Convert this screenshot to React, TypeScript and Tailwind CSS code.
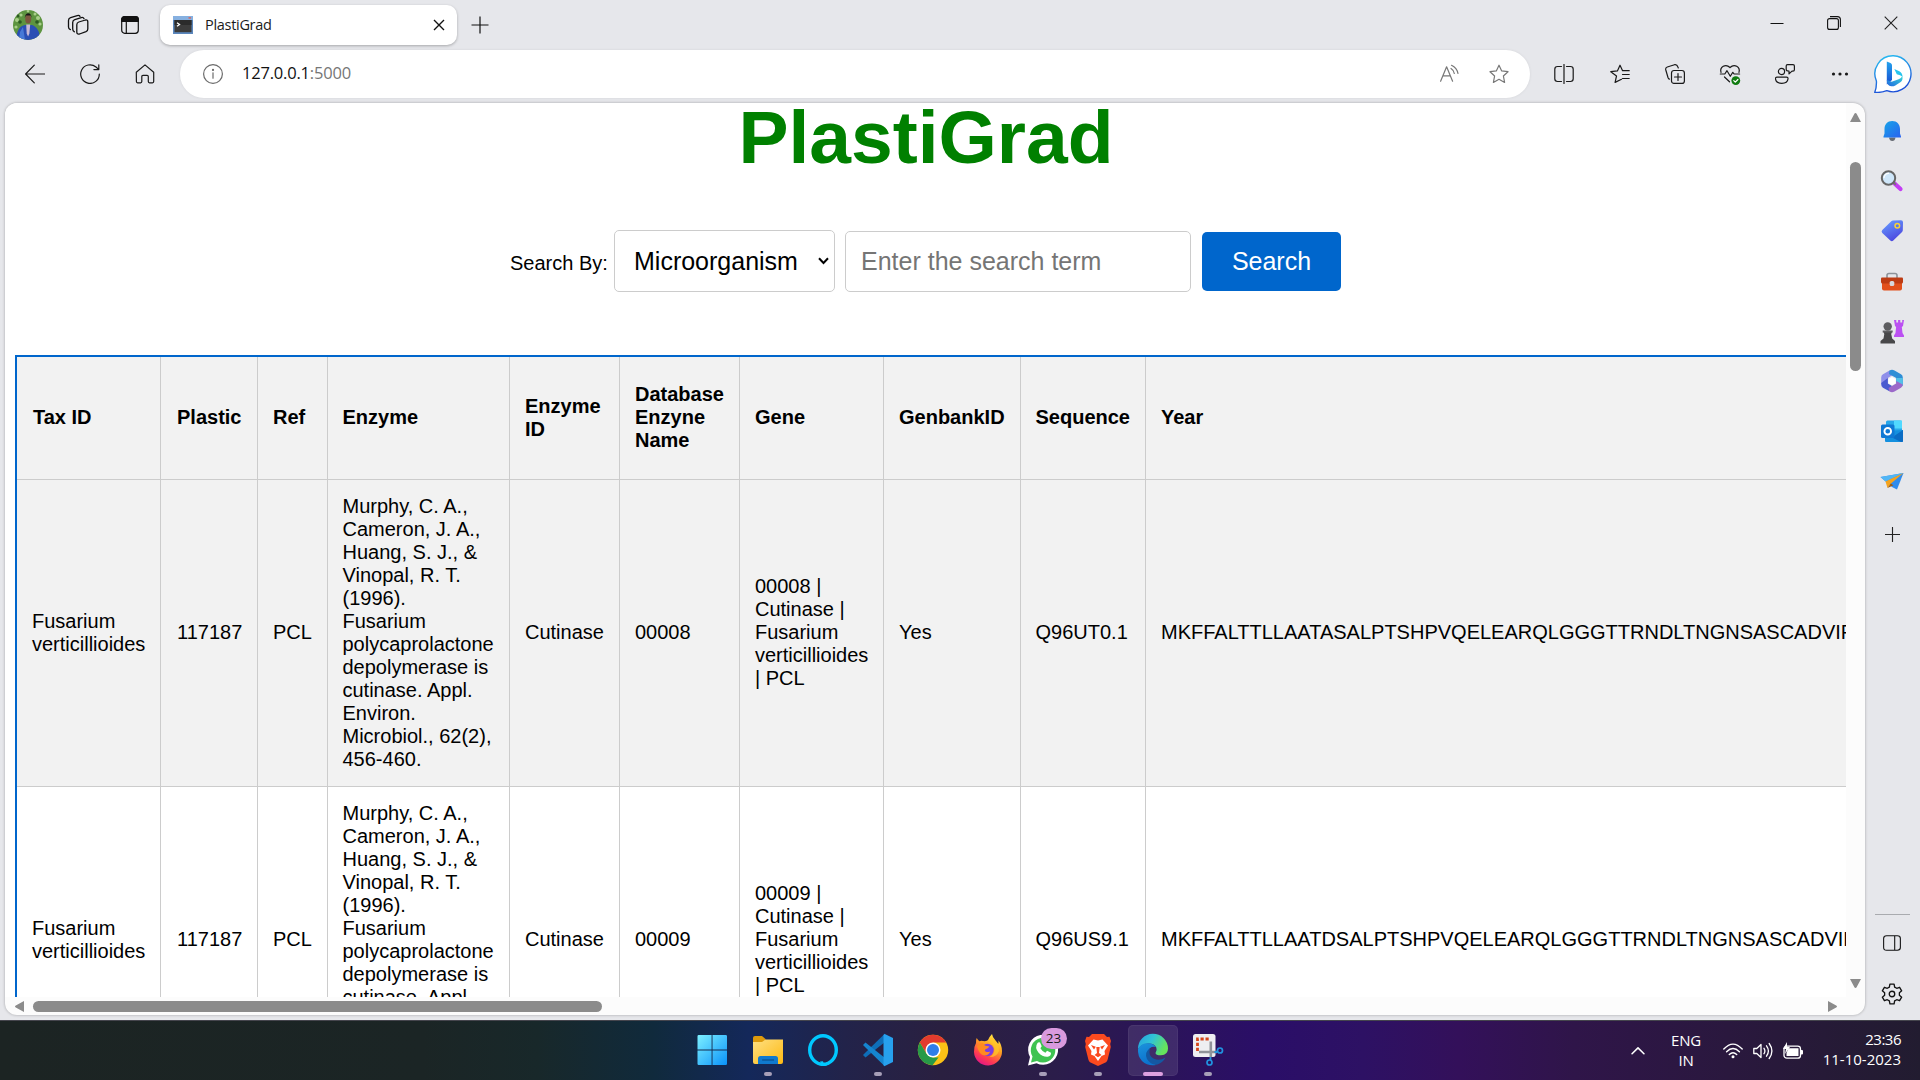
import React from "react";

type Kids = { children: React.ReactNode; className?: string };

function Line({ children, className = "" }: Kids) {
  return (
    <svg
      viewBox="0 0 20 20"
      fill="none"
      stroke="currentColor"
      strokeWidth="1.2"
      strokeLinecap="round"
      strokeLinejoin="round"
      className={"block h-5 w-5 shrink-0 " + className}
    >
      {children}
    </svg>
  );
}

function Slot({ children, className = "" }: Kids) {
  return <div className={"flex shrink-0 items-center justify-center " + className}>{children}</div>;
}

function Avatar() {
  return (
    <svg viewBox="0 0 30 30" className="block h-[30px] w-[30px]">
      <defs>
        <clipPath id="av"><circle cx="15" cy="15" r="15" /></clipPath>
      </defs>
      <g clipPath="url(#av)">
        <rect width="30" height="30" fill="#5d9440" />
        <g fill="#a9cf8a">
          <circle cx="4" cy="10" r="2" /><circle cx="8" cy="5" r="1.6" /><circle cx="25" cy="8" r="2" /><circle cx="15" cy="1" r="1.4" />
          <circle cx="22" cy="4" r="1.5" /><circle cx="27" cy="14" r="1.6" /><circle cx="3" cy="17" r="1.6" />
        </g>
        <g fill="#2c5a22">
          <circle cx="7" cy="12" r="1.8" /><circle cx="24" cy="12" r="1.8" /><circle cx="5" cy="6" r="1.4" />
        </g>
        <path d="M3 30 C4 19 7 16 12 15 L19 15 C24 17 27 21 27 30Z" fill="#2a4fb4" />
        <path d="M7 22 L10 17 L12 30 H6Z" fill="#4779d6" />
        <path d="M13.2 14.5h4l-.8 9-1.3 3-1.4-3z" fill="#c9b9d4" />
        <ellipse cx="15.2" cy="9" rx="3" ry="4.6" fill="#7c563f" />
        <path d="M11.8 8 C11.5 1.5 19 1.5 18.6 8 L17.8 5.5 H12.8Z" fill="#1a1716" />
      </g>
    </svg>
  );
}

function TabStrip() {
  return (
    <div className="flex h-[46px] shrink-0 items-start">
      <Slot className="ml-[3px] h-[50px] w-[50px]"><Avatar /></Slot>
      <Slot className="h-[50px] w-[49px]">
        <svg viewBox="0 0 22 22" className="block h-[22px] w-[22px]" fill="none" stroke="#111" strokeWidth="1.3" strokeLinejoin="round" strokeLinecap="round">
          <path d="M11.800 8L18.500 6Q20.800 5.500 20.800 7.800V15Q20.800 17 19 17.700L12.500 20Q9.800 20.700 9.800 18V10.700Q9.800 8.600 11.800 8Z" />
          <path d="M7.400 17.800 C6 17.200 5.700 16.500 5.700 15 V8.400 C5.700 6.800 6.600 6 7.800 5.600 L14.300 3.600 C15.600 3.200 16.500 3.600 17 4.600" />
          <path d="M3.400 15.600 C2 15 1.500 14.300 1.500 13 V6.400 C1.500 4.800 2.300 4 3.600 3.600 L10.300 1.600 C11.600 1.200 12.500 1.600 13 2.400" />
        </svg>
      </Slot>
      <Slot className="h-[50px] w-[56px]">
        <svg viewBox="0 0 18 18" className="block h-[18px] w-[18px]" fill="none" stroke="#111" strokeWidth="1.2">
          <rect x=".7" y=".7" width="16.6" height="16.6" rx="3" />
          <path d="M.7 5.5 V3.5 Q.7.7 3.5.7 H14.5 Q17.3.7 17.3 3.5 V5.5Z" fill="#111" />
          <path d="M5.3 5v12" />
        </svg>
      </Slot>
      <div className="ml-[2px] mt-[5px] flex h-[40px] w-[297px] shrink-0 items-center rounded-[10px] bg-white pl-[13px] shadow-[0_1px_3px_rgba(0,0,0,0.28)]">
        <svg viewBox="0 0 20 18" className="block h-[18px] w-5">
          <rect width="20" height="18" fill="#5b87bd" />
          <rect width="20" height="4" fill="#86b0e0" />
          <rect x="1.5" y="4" width="17" height="12.2" fill="#3c3c3c" />
          <rect x="1.5" y="4" width="17" height="5" fill="#2b2b2b" />
          <path d="M4 6.8 L6.500 8.500 L4 10.200" fill="none" stroke="#fff" strokeWidth="1.3" />
          <rect x="15.5" y="1.2" width="2.5" height="1.4" fill="#d9645a" />
        </svg>
        <span className="-mt-px ml-[12px] w-[228px] font-['Open_Sans',sans-serif] text-[14.5px] tracking-[-0.3px] text-[#1b1b1b]">PlastiGrad</span>
        <svg viewBox="0 0 12 12" className="block h-3 w-3 shrink-0" stroke="#111" strokeWidth="1.4"><path d="M1 1l10 10M11 1L1 11" /></svg>
      </div>
      <Slot className="h-[50px] w-[46px]">
        <svg viewBox="0 0 18 18" className="block h-[18px] w-[18px]" stroke="#111" strokeWidth="1.2"><path d="M9 .5v17M.5 9h17" /></svg>
      </Slot>
      <div className="flex-1" />
      <Slot className="h-[45px] w-[57px]"><svg viewBox="0 0 14 14" className="h-[14px] w-[14px]" stroke="#111" strokeWidth="1"><path d="M.5 7.500h13" /></svg></Slot>
      <Slot className="h-[45px] w-[57px]">
        <svg viewBox="0 0 14 14" className="h-[14px] w-[14px]" fill="none" stroke="#111" strokeWidth="1.1">
          <rect x=".6" y="2.6" width="10.8" height="10.8" rx="2" /><path d="M3 .6h7.400Q13.400.6 13.400 3.600V11" />
        </svg>
      </Slot>
      <Slot className="h-[45px] w-[58px]"><svg viewBox="0 0 14 14" className="h-[14px] w-[14px]" stroke="#222" strokeWidth="1.1"><path d="M.7.7l12.600 12.600M13.300.7L.7 13.300" /></svg></Slot>
    </div>
  );
}

const STAR = "M10 1.200 L12.700 6.900 L19 7.700 L14.400 12 L15.600 18.400 L10 15.300 L4.400 18.400 L5.600 12 L1 7.700 L7.300 6.900Z";

function Toolbar() {
  return (
    <div className="flex h-[57px] shrink-0 items-start pt-[4px] text-[#1a1a1a]">
      <Slot className="ml-[7px] h-[47px] w-[56px]"><Line><path d="M19.500 10H.6M9.300 1.200L.6 10l8.700 8.800" /></Line></Slot>
      <Slot className="h-[47px] w-[54px]"><Line><path d="M19.300 10A9.300 9.300 0 1 1 16 3l2.600 2.400M18.800.8v4.800h-4.900" /></Line></Slot>
      <Slot className="h-[47px] w-[56px]"><Line><path d="M1.300 8.200L10 .9l8.700 7.300V17.600q0 1.200-1.200 1.200h-3q-1.200 0-1.200-1.200v-5q0-1.200-1.200-1.200H8q-1.200 0-1.200 1.200v5q0 1.200-1.200 1.200h-3q-1.200 0-1.200-1.200Z" /></Line></Slot>
      <div className="ml-[7px] flex h-[48px] w-[1350px] shrink-0 items-center rounded-full bg-white shadow-[0_0_3px_rgba(0,0,0,0.08)]">
        <Slot className="mb-[1px] ml-[9px] h-[47px] w-[48px] text-[#6b6b6b]"><Line><circle cx="10" cy="10" r="9.400" /><path d="M10 8.800v5.400" /><circle cx="10" cy="5.900" r=".5" fill="currentColor" /></Line></Slot>
        <span className="-mt-px ml-[5px] flex-1 font-['Open_Sans',sans-serif] text-[16.500px] tracking-[-0.2px] text-[#111]">127.0.0.1<span className="text-[#767676]">:5000</span></span>
        <Slot className="mb-[1px] h-[47px] w-[49px] text-[#777]"><Line><path d="M.6 17.200L6.600 2.800l6 14.400M3 11.800h7.400M11 4.500q3 1.800 3.300 5M11.500 1.300q5.500 2.700 6.500 8.200" /></Line></Slot>
        <Slot className="mb-[1px] mr-[6px] h-[47px] w-[50px] text-[#777]"><Line><path d={STAR} /></Line></Slot>
      </div>
      <Slot className="ml-[7px] h-[47px] w-[54px]"><Line><path d="M10 .4v19.200M7.500 2.500H3.500Q.8 2.500.8 5.200v9.600q0 2.700 2.700 2.700h4M12.500 2.500h4q2.700 0 2.700 2.700v9.600q0 2.700-2.700 2.700h-4" /></Line></Slot>
      <Slot className="h-[47px] w-[57px]"><Line><path d="M11.500 15.300l-6.400 3.100L6.500 12 .8 7.700l6.600-.8L10 1.200l2.600 5.500h6.600M12.500 10.500h6.700M12.500 14.500h6.700" /></Line></Slot>
      <Slot className="h-[47px] w-[54px]"><Line><rect x="6.500" y="6.500" width="12.900" height="12.900" rx="2.500" /><path d="M13 9.500v7M9.500 13h7M4.500 15.200Q3.500 15 3 13.500L.8 6Q.2 3.700 2.300 3L9.500.7Q12 .2 12.800 2.800L13.300 4" /></Line></Slot>
      <Slot className="h-[47px] w-[55px]">
        <Line className="overflow-visible"><path d="M1 8.300C-.5 3 5.500-.8 10 3.500 14.500-.8 20.500 3 19 8.300M.3 10h4.500l2.200-3.300 3.300 5.600 2.500-4 1.300 1.700h5.500M4.500 13l5 4.800" /><circle cx="15.800" cy="16.600" r="4.400" fill="#107c10" stroke="none" /><path d="M13.800 16.700l1.500 1.500 2.600-2.700" stroke="#fff" /></Line>
      </Slot>
      <Slot className="h-[47px] w-[55px]"><Line><circle cx="6.500" cy="7.500" r="3.100" /><path d="M2 13.200h9.500q1.700 0 1.500 1.700-.5 4.400-6.200 4.400T.5 14.900q-.2-1.700 1.500-1.700zM12.500.7H18q1.400 0 1.400 1.400v3.600q0 1.400-1.400 1.400h-1l-3 2.800V7q-2.800 0-2.800-1.600V2.100q0-1.400 1.300-1.400z" /></Line></Slot>
      <Slot className="h-[47px] w-[55px]"><Line><g fill="currentColor" stroke="none"><circle cx="3.500" cy="10" r="1.600" /><circle cx="10" cy="10" r="1.600" /><circle cx="16.500" cy="10" r="1.600" /></g></Line></Slot>
      <Slot className="ml-[1px] h-[48px] w-[50px]">
        <svg viewBox="0 0 38 38" className="block h-[38px] w-[38px]">
          <defs>
            <linearGradient id="bo" x1="0" y1="0" x2=".3" y2="1"><stop stopColor="#29c3f2" /><stop offset="1" stopColor="#1d51d8" /></linearGradient>
            <linearGradient id="bb" x1="0" y1="0" x2="0" y2="1"><stop stopColor="#24a4ee" /><stop offset="1" stopColor="#164bd0" /></linearGradient>
            <linearGradient id="bc" x1="1" y1="0" x2="0" y2="1"><stop stopColor="#35d6d8" /><stop offset="1" stopColor="#2166e0" /></linearGradient>
          </defs>
          <path d="M19.300.8a18 18 0 1 1-6.500 34.900C9 37.300 5 37.600.8 37.200 2.300 33.500 2.600 30 2.400 26A18 18 0 0 1 19.300.8Z" fill="#fff" stroke="url(#bo)" strokeWidth="1.400" />
          <path d="M12.800 6.500l3.700 1.500q1.500.7 1.500 2.200V25l-5.200 4.500Z" fill="url(#bb)" />
          <path d="M20.300 14l5 2.200q3.200 1.600 3.200 5.500-2-1.700-5.700-2.500Z" fill="#27c5ee" />
          <path d="M12.800 25q0 5.800 4.500 6.300 2 .3 4-.9l5.400-3.300q2.500-1.900 1.600-6-.9 2.400-3.700 3.200L17.700 26.800Z" fill="url(#bc)" />
        </svg>
      </Slot>
    </div>
  );
}

const HEADS = ["Tax ID", "Plastic", "Ref", "Enzyme", "Enzyme\nID", "Database\nEnzyne\nName", "Gene", "GenbankID", "Sequence", "Year"];
const CITE = "Murphy, C. A.,\nCameron, J. A.,\nHuang, S. J., &\nVinopal, R. T.\n(1996).\nFusarium\npolycaprolactone\ndepolymerase is\ncutinase. Appl.\nEnviron.\nMicrobiol., 62(2),\n456-460.";
const ROWS = [
  ["Fusarium\nverticillioides", "117187", "PCL", CITE, "Cutinase", "00008", "00008 |\nCutinase |\nFusarium\nverticillioides\n| PCL", "Yes", "Q96UT0.1", "MKFFALTTLLAATASALPTSHPVQELEARQLGGGTTRNDLTNGNSASCADVIFI"],
  ["Fusarium\nverticillioides", "117187", "PCL", CITE, "Cutinase", "00009", "00009 |\nCutinase |\nFusarium\nverticillioides\n| PCL", "Yes", "Q96US9.1", "MKFFALTTLLAATDSALPTSHPVQELEARQLGGGTTRNDLTNGNSASCADVIFI"],
];

// Cells with an odd number of lines leave half a pixel when centred; the extra padding rounds it upwards.
function cellClass(text: string, column: number) {
  const odd = text.split("\n").length % 2 === 1;
  return (
    "border-b border-r border-[#cccccc] pt-0 pr-0 align-middle " +
    (odd ? "pb-[2px] " : "pb-0 ") +
    (column === 1 || text === "Tax ID" ? "pl-[16px]" : column === 3 || column === 8 ? "pl-[14.500px]" : "pl-[15px]")
  );
}

function DataTable() {
  return (
    <div className="mt-[63px] ml-[10px] w-[2000px] border-l-2 border-t-2 border-[#0066cc]">
      <table className="w-[2000px] table-fixed border-separate border-spacing-0 text-left text-[20px] leading-[23px] whitespace-pre text-black">
        <colgroup>
          <col className="w-[144px]" /><col className="w-[97px]" /><col className="w-[70px]" /><col className="w-[182px]" /><col className="w-[110px]" />
          <col className="w-[120px]" /><col className="w-[144px]" /><col className="w-[137px]" /><col className="w-[125px]" /><col />
        </colgroup>
        <thead>
          <tr className="h-[123px] bg-[#f2f2f2]">
            {HEADS.map((h, j) => <th key={h} className={cellClass(h, j) + " font-bold"}>{h}</th>)}
          </tr>
        </thead>
        <tbody>
          {ROWS.map((r, i) => (
            <tr key={r[5]} className={i === 0 ? "h-[307px] bg-[#f2f2f2]" : "h-[307px] bg-white"}>
              {r.map((c, j) => <td key={j} className={cellClass(c, j)}>{c}</td>)}
            </tr>
          ))}
        </tbody>
      </table>
    </div>
  );
}

function Page() {
  return (
    <div className="ml-[5px] flex h-[912px] w-[1860px] shrink-0 flex-col overflow-hidden rounded-[12px] bg-[#fcfcfc] font-['Liberation_Sans',Arial,sans-serif] shadow-[0_0_3px_rgba(0,0,0,0.3)]">
      <div className="flex h-[894px] shrink-0">
        <div className="h-[894px] w-[1841px] shrink-0 overflow-hidden bg-white">
          <h1 className="-mt-[9px] h-[86px] pl-[1px] text-center text-[75px] font-bold leading-[86px] text-[#008000]">PlastiGrad</h1>
          <div className="mt-[50px] flex h-[62px] items-center pl-[505px] text-[25px] text-black">
            <span className="mt-[3px] w-[104px] text-[20px]">Search By:</span>
            <div className="flex h-[62px] w-[221px] items-center justify-between rounded-[5px] border border-[#cccccc] pl-[19px] pr-[5px]">
              <span className="mt-[1px]">Microorganism</span>
              <svg viewBox="0 0 11 8" className="block h-2 w-[11px]" fill="none" stroke="#000" strokeWidth="2"><path d="M1 1.300l4.500 4.700L10 1.300" /></svg>
            </div>
            <input
              className="ml-[10px] mt-[1px] h-[61px] w-[346px] rounded-[5px] border border-[#cccccc] bg-white pl-[15px] placeholder:text-[#757575]"
              placeholder="Enter the search term"
            />
            <button className="ml-[11px] mt-[1px] h-[59px] w-[139px] rounded-[5px] bg-[#0066cc] text-white">Search</button>
          </div>
          <DataTable />
        </div>
        <div className="flex w-[19px] flex-col items-center pt-[10px]">
          <svg viewBox="0 0 11 9" className="block h-[9px] w-[11px]"><path d="M5.500 0Q6.200 0 6.600.8L11 9H0L4.400.8Q4.800 0 5.500 0Z" fill="#8b8b8b" /></svg>
          <div className="mt-[40px] h-[209px] w-[11px] rounded-full bg-[#8b8b8b]" />
          <div className="flex-1" />
          <svg viewBox="0 0 11 9" className="mb-[9px] block h-[9px] w-[11px]"><path d="M5.500 9Q6.200 9 6.600 8.200L11 0H0L4.400 8.200Q4.800 9 5.500 9Z" fill="#8b8b8b" /></svg>
        </div>
      </div>
      <div className="flex h-[18px] items-center pl-[10px]">
        <svg viewBox="0 0 9 11" className="block h-[11px] w-[9px]"><path d="M0 5.500Q0 4.800.8 4.400L9 0V11L.8 6.600Q0 6.200 0 5.500Z" fill="#8b8b8b" /></svg>
        <div className="ml-[9px] h-[11px] w-[569px] rounded-full bg-[#8b8b8b]" />
        <div className="flex-1" />
        <svg viewBox="0 0 9 11" className="mr-[28px] block h-[11px] w-[9px]"><path d="M9 5.500Q9 4.800 8.200 4.400L0 0V11L8.200 6.600Q9 6.200 9 5.500Z" fill="#8b8b8b" /></svg>
      </div>
    </div>
  );
}

const SW = "block h-6 w-6 overflow-visible";

function Sidebar() {
  return (
    <div className="flex w-[54px] shrink-0 flex-col items-center pt-[3px]">
      <Slot className="h-[50px]">
        <svg viewBox="0 0 24 24" className={SW}>
          <defs><linearGradient id="s1" x1="0" y1="0" x2="1" y2="1"><stop stopColor="#16a5e8" /><stop offset="1" stopColor="#2a62f0" /></linearGradient></defs>
          <path d="M9 18.500h6.500q-.5 3.500-3.200 3.500T9 18.500Z" fill="#666b73" />
          <path d="M12.200 2c4.800 0 7.800 3.300 7.800 8v4.500l1 3V18.500H3.500V17.500l1-3V10c0-4.700 3-8 7.700-8Z" fill="url(#s1)" />
        </svg>
      </Slot>
      <Slot className="h-[49px]">
        <svg viewBox="0 0 24 24" className={SW}>
          <path d="M14 14l6.500 6" stroke="#c43df5" strokeWidth="4.200" strokeLinecap="round" />
          <path d="M12.800 13l3 2.800" stroke="#777" strokeWidth="2" />
          <circle cx="8.500" cy="9" r="6.700" fill="#cfe7fa" stroke="#666" strokeWidth="2" />
          <path d="M4 9A4.500 4.500 0 0 1 9 4.500" fill="none" stroke="#fff" strokeWidth="1.200" />
        </svg>
      </Slot>
      <Slot className="h-[51px]">
        <svg viewBox="0 0 24 24" className={SW}>
          <defs><linearGradient id="s2" x1=".2" y1="0" x2=".7" y2="1"><stop stopColor="#669bff" /><stop offset="1" stopColor="#4a42dd" /></linearGradient></defs>
          <path d="M13 1.500l8-.2q2 0 2 2l-.2 8q0 1.200-1 2l-8.500 8.200q-1.500 1.300-3 0L2.300 14q-1.400-1.500 0-3l9-8.800q.7-.7 1.700-.7Z" fill="url(#s2)" />
          <circle cx="17.300" cy="6.800" r="2.300" fill="#5577ee" stroke="#f8d238" strokeWidth="1.500" />
        </svg>
      </Slot>
      <Slot className="h-[51px]">
        <svg viewBox="0 0 24 24" className={SW}>
          <path d="M7 8V5.500q0-2 2-2h6q2 0 2 2V8" fill="none" stroke="#8d9299" strokeWidth="1.600" />
          <path d="M2 12h20v6.500q0 2-2 2H4q-2 0-2-2Z" fill="#e2501c" />
          <path d="M1 8.500q0-1 1-1h20q1 0 1 1V12q0 1.500-1.500 1.500h-19Q1 13.500 1 12Z" fill="#bd3c14" />
          <rect x="9.700" y="11" width="4.600" height="5" rx="1.600" fill="#d7d9de" />
        </svg>
      </Slot>
      <Slot className="h-[49px]">
        <svg viewBox="0 0 24 24" className={SW}>
          <path d="M14 0h2.300v2.500h1.800V0h2.200v2.500h1.900V0H24l-1 6-1.200 1 .7 6L24 15.500V17H14v-1.500l1.500-2.500.6-6L15 6Z" fill="#bb50f2" />
          <path d="M3.500 12h8.500l-.8 2 1 4.500L15 21v2.500H.5V21l3-2.500.8-4.500Z" fill="#48484a" />
          <path d="M2.700 10.500h10v2h-10z" fill="#5d5d60" />
          <circle cx="7.700" cy="6.500" r="4.200" fill="#5d5d60" />
        </svg>
      </Slot>
      <Slot className="h-[50px]">
        <svg viewBox="0 0 24 24" className={SW}>
          <path d="M9.500 1.500L3 5.300Q1.200 6.400 1.200 8.500v7q0 2.500 2.200 3.500L7.800 16V9L15 4.500Z" fill="#8f8fea" />
          <path d="M9.500 1.500q2.500-1.300 5 0L21 5.300q1.800 1.100 1.800 3.200v7q0 .8-.4 1.500L16.200 14V9L9 5Z" fill="#2f8ed6" />
          <path d="M16.200 9V14l6.200 3q.4-.8.4-1.500V9Z" fill="#53c0e8" />
          <path d="M1.200 14q0 3.700 2.200 4.900l6 3.400L12 17 7.800 14.500V9Z" fill="#4a5bd0" />
          <path d="M9.500 22.500q2.500 1.300 5 0L21 18.700q1.800-1.200 1.800-3.200L16.200 12v2.500L8.500 19Z" fill="#9b69c9" />
          <path d="M12 8l3.700 2.100v4.100L12 16.300l-3.700-2.100v-4.100Z" fill="#fff" />
        </svg>
      </Slot>
      <Slot className="h-[50px]">
        <svg viewBox="0 0 24 24" className={SW}>
          <rect x="6" y="1.500" width="16" height="15" rx="1.500" fill="#28a8ea" />
          <rect x="14" y="1.500" width="8" height="8" fill="#50d9ff" />
          <path d="M5 12l18-1v11q0 1-1 1H6q-1 0-1-1Z" fill="#1490df" />
          <path d="M23 11L12 18.500 21 23h1q1 0 1-1Z" fill="#0a6cc4" />
          <rect x="1" y="5.500" width="13.500" height="13.500" rx="1.500" fill="#0f78d4" />
          <circle cx="7.750" cy="12.250" r="3.300" fill="none" stroke="#fff" strokeWidth="1.900" />
        </svg>
      </Slot>
      <Slot className="h-[50px]">
        <svg viewBox="0 0 24 24" className={SW}>
          <path d="M.5 8L23.500 4 17 20.500l-5-2.500Z" fill="#2e8cef" />
          <path d="M.5 8L23.500 4 5.500 12.500Z" fill="#51b6f5" />
          <path d="M23.500 4L5.500 12.500 7.500 19l3.500-4.500Z" fill="#f5a31d" />
          <path d="M7.500 19l3.300-4.500 2.700 1.700Z" fill="#9a5c18" />
        </svg>
      </Slot>
      <Slot className="h-[57px]"><Line className="h-[15px] w-[15px] text-[#222]"><path d="M10 .5v19M.5 10h19" strokeWidth="1.500" /></Line></Slot>
      <div className="flex-1" />
      <div className="h-px w-[35px] bg-[#a9abaf]" />
      <Slot className="h-[55px]"><Line className="h-[18px] text-[#111]"><path d="M4 2h12q3.300 0 3.300 3v10q0 3-3.300 3H4Q.7 18 .7 15V5Q.7 2 4 2ZM13 2v16" /></Line></Slot>
      <Slot className="mb-[3px] h-[47px]">
        <Line className="h-[22px] w-[22px] text-[#111]">
          <path d="M8.100 1h3.800l.5 2.700 1.900 1.100 2.600-.9 1.900 3.200-2.100 1.800v2.200l2.100 1.800-1.900 3.200-2.600-.9-1.900 1.100-.5 2.700H8.100l-.5-2.700-1.900-1.100-2.600.9-1.900-3.200 2.100-1.800V8.900L1.200 7.100l1.900-3.200 2.600.9 1.900-1.100Z" />
          <circle cx="10" cy="10" r="2.500" />
        </Line>
      </Slot>
    </div>
  );
}

function Pinned({ children, mark = "" }: { children: React.ReactNode; mark?: string }) {
  return (
    <div className="flex w-[55px] flex-col items-center justify-center">
      <div className={mark === "active" ? "flex h-[51px] w-[50px] flex-col items-center rounded-[5px] border border-white/5 bg-white/10 pt-[8px]" : "flex h-[53px] w-[50px] flex-col items-center pt-[10px]"}>
        <div className="relative flex h-[32px] w-[32px] items-center justify-center">{children}</div>
        {mark === "dot" && <div className="mt-[6px] h-1 w-2 rounded-full bg-[#a79fb8]" />}
        {mark === "active" && <div className="mt-[6px] h-1 w-5 shrink-0 rounded-full bg-[#dda0e0]" />}
      </div>
    </div>
  );
}

const TI = "block h-8 w-8 overflow-visible";

function Taskbar() {
  return (
    <div className="flex h-[60px] shrink-0 border-t border-[#45454d] bg-[linear-gradient(90deg,#1c2423_0%,#1b2525_22%,#18282a_28%,#102a3c_34%,#14285a_39%,#22234a_44%,#2a2040_49%,#2b1d4a_55%,#2b1458_60%,#2a0e68_66%,#2d1164_71%,#33105a_76%,#2f1549_82%,#2a183e_90%,#221c30_100%)] font-['Open_Sans',sans-serif] text-white">
      <div className="ml-[685px] flex">
        <Pinned>
          <svg viewBox="0 0 32 32" className={TI}>
            <defs><linearGradient id="w" x1="0" y1="0" x2="1" y2="1"><stop stopColor="#7df0ff" /><stop offset="1" stopColor="#0a92fa" /></linearGradient></defs>
            <path d="M1.700 1h12.900v14.500H.5V2.200Q.5 1 1.700 1ZM15.500 1h13.300Q30 1 30 2.200V15.500H15.500ZM.5 16.500h14.100V31H1.700Q.5 31 .5 29.800ZM15.500 16.500h14.500v13.300Q30 31 28.800 31H15.500Z" fill="url(#w)" />
          </svg>
        </Pinned>
        <Pinned mark="dot">
          <svg viewBox="0 0 32 32" className={TI}>
            <defs><linearGradient id="f" x1="0" y1="0" x2="1" y2="1"><stop stopColor="#ffe082" /><stop offset="1" stopColor="#fdb913" /></linearGradient></defs>
            <path d="M1 4q0-2 2-2h7l3.500 3v5H1Z" fill="#dd9a0c" />
            <path d="M1 8h9l3.500-2.500H31V28q0 2-2 2H3q-2 0-2-2Z" fill="url(#f)" />
            <path d="M6 30v-5.500Q6 22 8.500 22h15q2.500 0 2.500 2.500V30Z" fill="#1079cf" />
            <path d="M10 26h12" stroke="#0b4d8c" strokeWidth="1.200" />
          </svg>
        </Pinned>
        <Pinned>
          <svg viewBox="0 0 32 32" className={TI}>
            <ellipse cx="16" cy="16" rx="13.300" ry="14.200" fill="none" stroke="#00c8ff" strokeWidth="3.400" />
            <path d="M13.800 31.800q.4-3-.8-4.300l3-.2q1.500 2.500-.5 4.700Z" fill="#00c8ff" />
            <path d="M15.200 32q2-2.500 6-3.800l2 1.500-5 2.300Z" fill="#00c8ff" />
          </svg>
        </Pinned>
        <Pinned mark="dot">
          <svg viewBox="0 0 32 32" className={TI}>
            <path d="M23 0L3.500 19 1 21.500 3.500 24 23 8.500Z" fill="#0e6eb8" transform="translate(0 -.5)" />
            <path d="M23 32L3.500 13 1 10.500 3.500 8 23 23.500Z" fill="#1585cf" transform="translate(0 .5)" />
            <path d="M22.800 0L31 4v24l-8.200 4Q21.500 32 21.500 30.500v-29Q21.500 0 22.800 0Z" fill="#27a1ee" />
          </svg>
        </Pinned>
        <Pinned>
          <svg viewBox="0 0 32 32" className={TI}>
            <circle cx="16" cy="16" r="15.200" fill="#fbc116" />
            <path d="M2.800 8.400A15.200 15.200 0 0 1 29.200 8.500H16L9.600 19.700Z" fill="#e23b2e" />
            <path d="M2.800 8.400L9.500 19.800 16 23.500h5.500L15.500 31.200A15.200 15.200 0 0 1 2.800 8.400Z" fill="#279a48" />
            <circle cx="16" cy="16" r="7.500" fill="#fff" /><circle cx="16" cy="16" r="6" fill="#2f7eea" />
          </svg>
        </Pinned>
        <Pinned>
          <svg viewBox="0 0 32 32" className={TI}>
            <defs>
              <linearGradient id="ff" x1=".8" y1="0" x2=".3" y2="1"><stop stopColor="#fff24a" /><stop offset=".4" stopColor="#ffa320" /><stop offset=".75" stopColor="#ff3d50" /><stop offset="1" stopColor="#e31587" /></linearGradient>
            </defs>
            <path d="M20 0q.5 3.500 3.500 6.500 2 2 2.700 3.500.5-1.500.3-3.500 3.500 4.500 3.500 10.500a14 14 0 0 1-28 1q-.3-5 2-9-.2-3 .7-5 1 2 2.700 3.200Q9 6.500 11 7q4 .5 5-1Q17.500 2.500 20 0Z" fill="url(#ff)" />
            <circle cx="15.500" cy="16" r="6.200" fill="#7a3fe0" />
            <path d="M5 12q2.500-3 6-3 .5 2 2.500 2.800l4 .7q-1.500 2.300-4 2.700-1.300.8-.3 2 2 1.600 5 .3-1.500 4-5.500 4Q7 21 5 12Z" fill="#ff8a20" />
            <path d="M17 8q5 1.500 5.500 7.500-.3 5-5 7.500 7 .3 9.500-6Q27 9 20 3.500 17.500 5.500 17 8Z" fill="#ffc62a" opacity=".75" />
          </svg>
        </Pinned>
        <Pinned mark="dot">
          <svg viewBox="0 0 32 32" className={TI}>
            <path d="M1 31.500L3 23A15 15 0 1 1 9.500 29.200Z" fill="#fff" />
            <path d="M4 28.500l1.500-6A12.300 12.300 0 1 1 10 26.900Z" fill="#3fc351" />
            <path d="M10.500 9q1-1.300 2.500-.6l1.700 3.800-1.300 2q1.800 3.300 5 4.500l1.700-1.900 3.900 1.900q.2 3.300-3.300 4-5 .5-9.300-4.300-4-5-.9-9.400Z" fill="#fff" />
          </svg>
          <span className="absolute -top-[6px] left-[14px] flex h-[21px] w-[26px] items-center justify-center rounded-full bg-[#d99ade] text-[13.500px] leading-none text-[#1a1a1a]">23</span>
        </Pinned>
        <Pinned mark="dot">
          <svg viewBox="0 0 32 32" className={TI}>
            <path d="M10 0h12l3 3 2.500-.3L29 7l-.8 3 .6 3-3.300 13q-.5 1.500-1.500 2.300L16 32l-8-3.700q-1-.8-1.500-2.300L3.200 13l.6-3L3 7l1.500-4.300L7 3Z" fill="#fb4a1f" />
            <path d="M11.500 5.500l4.500 1 4.500-1 5.500 6-3.500 5.500.5 3.500-3.500 1.500L16 27l-3.500-5L9 20.500l.5-3.500L6 11.500Z" fill="#fff" />
            <path d="M9 11l4.800 1.800-1.800 2.700ZM23 11l-4.800 1.800 1.800 2.700ZM14.300 13h3.400l-.7 6 2.500 2-3.500 2.300L12.500 21l2.500-2Z" fill="#fb4a1f" />
          </svg>
        </Pinned>
        <Pinned mark="active">
          <svg viewBox="0 0 32 32" className={TI}>
            <defs>
              <linearGradient id="e1" x1="0" y1="0" x2="1" y2=".4"><stop stopColor="#249fe0" /><stop offset=".5" stopColor="#31c4d5" /><stop offset="1" stopColor="#66e45c" /></linearGradient>
              <linearGradient id="e2" x1="0" y1="0" x2=".3" y2="1"><stop stopColor="#1b93dc" /><stop offset="1" stopColor="#0c72cd" /></linearGradient>
            </defs>
            <path d="M1 15A15 15 0 0 1 31 14.500q0 6.500-7 6.800-5.500 0-5.500-2.300 2-2.500.8-5.500-2-4.300-8.300-4Q4.500 9.700 1 15Z" fill="url(#e1)" />
            <path d="M1 15q3-6 10-5.800 5.500 0 8 3.800-7-1-8.500 5.500-1 7.500 8.500 12.500Q11 32.500 5 27 .5 22 1 15Z" fill="url(#e2)" />
            <path d="M13 14.500q-2 7 3.500 10 6 3 12-1-2.500 5-8 7-6.500 1-10.500-5.500-3-7 3-10.500Z" fill="#1458a2" />
          </svg>
        </Pinned>
        <Pinned mark="dot">
          <svg viewBox="0 0 32 32" className={TI}>
            <rect x="1" y="0" width="22.500" height="23" rx="2.500" fill="#eeeef1" />
            <path d="M5.500 17V5H17.500" fill="none" stroke="#d4441a" strokeWidth="2.800" strokeDasharray="3.200 1.800" />
            <path d="M18.800 7.500v15.500M7 18h18" stroke="#909399" strokeWidth="2.600" />
            <circle cx="28" cy="16.500" r="2.500" fill="none" stroke="#2193e0" strokeWidth="1.700" />
            <circle cx="17.500" cy="28.500" r="2.500" fill="none" stroke="#2193e0" strokeWidth="1.700" />
            <path d="M25.500 18h-3M18.500 26v-3" stroke="#2193e0" strokeWidth="1.800" />
          </svg>
        </Pinned>
      </div>
      <div className="flex-1" />
      <div className="flex items-center text-[15px] leading-[20px]">
        <Line className="mr-[-4px] h-[14px] w-[14px] text-white"><path d="M1.500 14L10 5.500 18.500 14" strokeWidth="2.200" /></Line>
        <div className="ml-[12px] mb-[1px] w-[66px] text-center tracking-[-0.2px]">ENG<br />IN</div>
        <svg viewBox="0 0 20 16" className="ml-[4px] block h-4 w-5" fill="none" stroke="#fff" strokeWidth="1.400" strokeLinecap="round">
          <path d="M.8 6Q10-3.800 19.200 6M3.600 8.800Q10 2.300 16.400 8.800M6.300 11.500Q10 8 13.700 11.500" /><circle cx="10" cy="13.700" r="1.500" fill="#fff" stroke="none" />
        </svg>
        <svg viewBox="0 0 20 18" className="ml-[10px] block h-[18px] w-5" fill="none" stroke="#fff" strokeWidth="1.300" strokeLinecap="round" strokeLinejoin="round">
          <path d="M.8 6.500h3L8 2.500v13L3.800 11.500h-3ZM11 6.300q1.800 2.700 0 5.400M13.500 3.800q3.800 5.200 0 10.400M16.200 1.500q5.400 7.500 0 15" />
        </svg>
        <svg viewBox="0 0 20 18" className="ml-[10px] block h-[18px] w-5">
          <rect x="1" y="4.200" width="16.500" height="12" rx="2.800" fill="none" stroke="#fff" strokeWidth="1.300" />
          <path d="M5.500 6.300h10v7.800h-12V11ZM18 8h1q1 0 1 1v2.500q0 1-1 1h-1Z" fill="#fff" />
          <path d="M4 0L0 7h3l-1 5 5-7H4Z" fill="#fff" />
        </svg>
        <div className="mb-[3px] ml-[10px] mr-[19px] w-[88px] whitespace-nowrap text-right">
          <span className="tracking-[-0.5px]">23:36</span><br />11-10-2023
        </div>
      </div>
    </div>
  );
}

export default function App() {
  return (
    <div className="flex h-[1080px] w-[1920px] flex-col overflow-hidden bg-[#e6e7eb]">
      <TabStrip />
      <Toolbar />
      <div className="flex h-[917px] shrink-0">
        <Page />
        <Sidebar />
      </div>
      <Taskbar />
    </div>
  );
}
